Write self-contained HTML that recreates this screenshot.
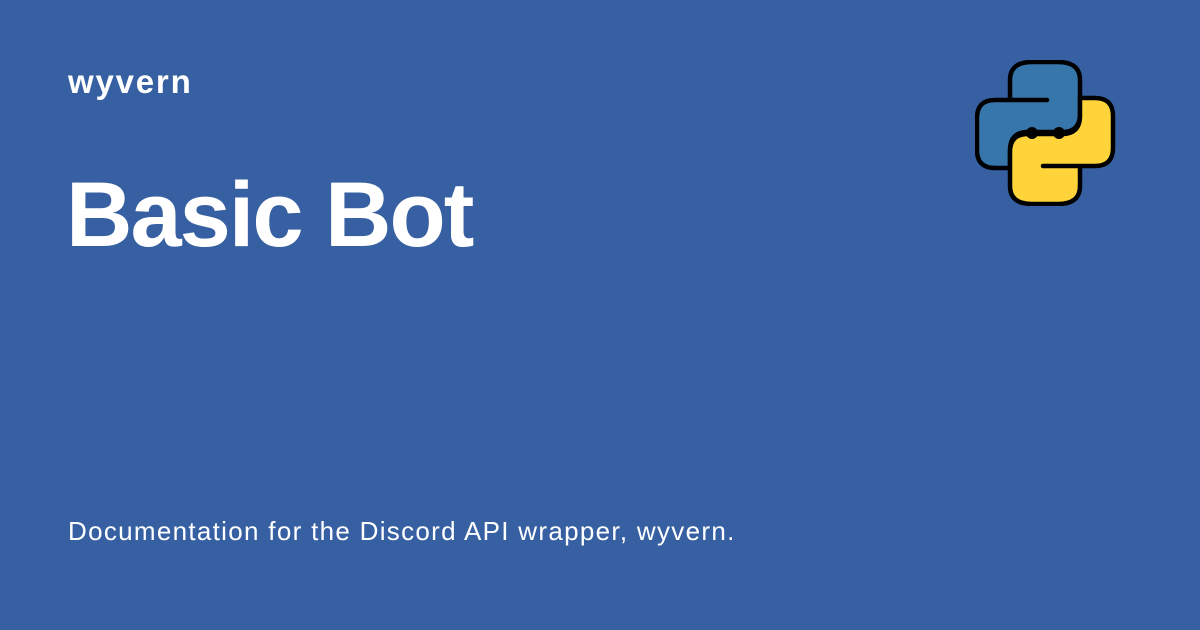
<!DOCTYPE html>
<html><head><style>
html,body{margin:0;padding:0}
body{width:1200px;height:630px;background:#3760a3;position:relative;overflow:hidden;font-family:"Liberation Sans",sans-serif;color:#fff}
.s{position:absolute;left:68px;top:62px;font-size:33px;font-weight:bold;line-height:40px;letter-spacing:1.8px}
.t{position:absolute;left:66px;top:160px;font-size:92px;font-weight:bold;line-height:110px;letter-spacing:-2px}
.d{position:absolute;left:68px;top:514px;font-size:26px;line-height:34px;letter-spacing:1.3px}
svg{position:absolute;left:975px;top:60px}
</style></head><body>
<div class="s">wyvern</div>
<div class="t">Basic Bot</div>
<div class="d">Documentation for the Discord API wrapper, wyvern.</div>
<svg width="142" height="146" viewBox="-2 -2 142 146">
<g stroke="#000" stroke-width="4.5" stroke-linejoin="round" stroke-linecap="round">
<path d="M33,38 L33,18 Q33,0 55,0 L81,0 Q103,0 103,18 L103,52 Q103,70 85,70 L51,70 Q33,70 33,88 L33,106 L18,106 Q0,106 0,88 L0,56 Q0,38 18,38 Z M33,38 L70,38" fill="#3776ab"/>
<g transform="rotate(180 68 71)">
<path d="M33,38 L33,18 Q33,0 55,0 L81,0 Q103,0 103,18 L103,52 Q103,70 85,70 L51,70 Q33,70 33,88 L33,106 L18,106 Q0,106 0,88 L0,56 Q0,38 18,38 Z M33,38 L70,38" fill="#ffd43b"/>
</g>
</g>
<circle cx="55" cy="71" r="6" fill="#000"/>
<circle cx="82" cy="71" r="6" fill="#000"/>
</svg>
</body></html>
